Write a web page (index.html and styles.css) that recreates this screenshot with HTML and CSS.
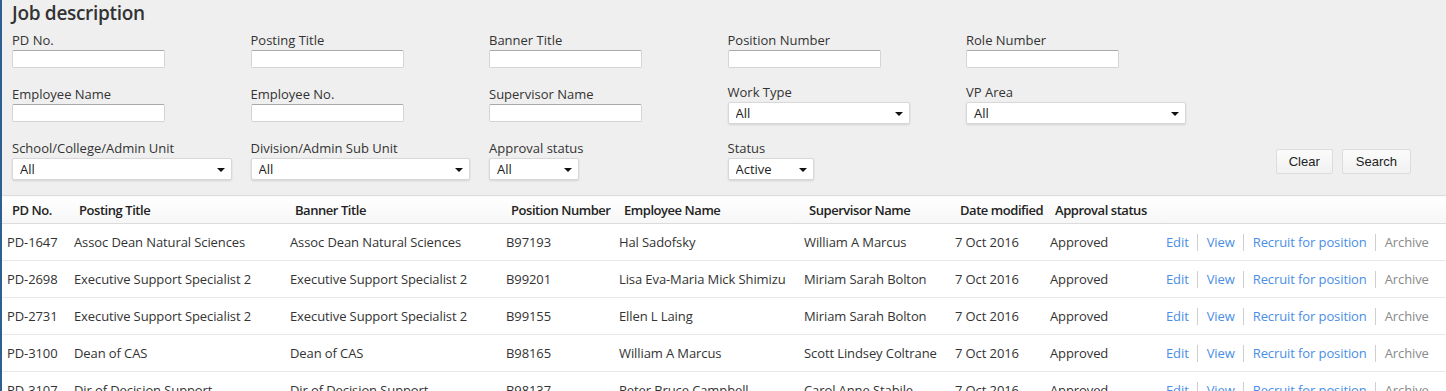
FILE: index.html
```html
<html>
  <head>
    <title>Job description</title>
    <link rel="stylesheet" href="styles.css">
  </head>
  <body>
    <div class="filters">
      <h1>Job description</h1>

      <div class="grid">
        <div class="field"><label>PD No.</label><input type="text"></div>
        <div class="field"><label>Posting Title</label><input type="text"></div>
        <div class="field"><label>Banner Title</label><input type="text"></div>
        <div class="field"><label>Position Number</label><input type="text"></div>
        <div class="field"><label>Role Number</label><input type="text"></div>
        <div></div>

        <div class="field"><label>Employee Name</label><input type="text"></div>
        <div class="field"><label>Employee No.</label><input type="text"></div>
        <div class="field"><label>Supervisor Name</label><input type="text"></div>
        <div class="field">
          <label>Work Type</label>
          <div class="select w182"><select><option>All</option></select></div>
        </div>
        <div class="field">
          <label>VP Area</label>
          <div class="select w220"><select><option>All</option></select></div>
        </div>
        <div></div>

        <div class="field">
          <label>School/College/Admin Unit</label>
          <div class="select w220"><select><option>All</option></select></div>
        </div>
        <div class="field">
          <label>Division/Admin Sub Unit</label>
          <div class="select w219"><select><option>All</option></select></div>
        </div>
        <div class="field">
          <label>Approval status</label>
          <div class="select w90"><select><option>All</option></select></div>
        </div>
        <div class="field">
          <label>Status</label>
          <div class="select w86"><select><option>Active</option></select></div>
        </div>
        <div class="buttons">
          <button>Clear</button>
          <button class="wide">Search</button>
        </div>
      </div>
    </div>

    <table class="results">
      <colgroup>
        <col style="width: 67px">
        <col style="width: 216px">
        <col style="width: 216px">
        <col style="width: 113px">
        <col style="width: 185px">
        <col style="width: 151px">
        <col style="width: 95px">
        <col style="width: 116px">
        <col>
      </colgroup>
      <thead>
        <tr>
          <th>PD No.</th>
          <th>Posting Title</th>
          <th>Banner Title</th>
          <th>Position Number</th>
          <th>Employee Name</th>
          <th>Supervisor Name</th>
          <th>Date modified</th>
          <th>Approval status</th>
          <th></th>
        </tr>
      </thead>
      <tbody>
        <tr>
          <td>PD-1647</td>
          <td>Assoc Dean Natural Sciences</td>
          <td>Assoc Dean Natural Sciences</td>
          <td>B97193</td>
          <td>Hal Sadofsky</td>
          <td>William A Marcus</td>
          <td>7 Oct 2016</td>
          <td>Approved</td>
          <td><div class="actions"><a href="#">Edit</a><span class="sep"></span><a href="#">View</a><span class="sep"></span><a href="#">Recruit for position</a><span class="sep"></span><a href="#" class="muted">Archive</a></div></td>
        </tr>
        <tr>
          <td>PD-2698</td>
          <td>Executive Support Specialist 2</td>
          <td>Executive Support Specialist 2</td>
          <td>B99201</td>
          <td>Lisa Eva-Maria Mick Shimizu</td>
          <td>Miriam Sarah Bolton</td>
          <td>7 Oct 2016</td>
          <td>Approved</td>
          <td><div class="actions"><a href="#">Edit</a><span class="sep"></span><a href="#">View</a><span class="sep"></span><a href="#">Recruit for position</a><span class="sep"></span><a href="#" class="muted">Archive</a></div></td>
        </tr>
        <tr>
          <td>PD-2731</td>
          <td>Executive Support Specialist 2</td>
          <td>Executive Support Specialist 2</td>
          <td>B99155</td>
          <td>Ellen L Laing</td>
          <td>Miriam Sarah Bolton</td>
          <td>7 Oct 2016</td>
          <td>Approved</td>
          <td><div class="actions"><a href="#">Edit</a><span class="sep"></span><a href="#">View</a><span class="sep"></span><a href="#">Recruit for position</a><span class="sep"></span><a href="#" class="muted">Archive</a></div></td>
        </tr>
        <tr>
          <td>PD-3100</td>
          <td>Dean of CAS</td>
          <td>Dean of CAS</td>
          <td>B98165</td>
          <td>William A Marcus</td>
          <td>Scott Lindsey Coltrane</td>
          <td>7 Oct 2016</td>
          <td>Approved</td>
          <td><div class="actions"><a href="#">Edit</a><span class="sep"></span><a href="#">View</a><span class="sep"></span><a href="#">Recruit for position</a><span class="sep"></span><a href="#" class="muted">Archive</a></div></td>
        </tr>
        <tr>
          <td>PD-3107</td>
          <td>Dir of Decision Support</td>
          <td>Dir of Decision Support</td>
          <td>B98137</td>
          <td>Peter Bruce Campbell</td>
          <td>Carol Anne Stabile</td>
          <td>7 Oct 2016</td>
          <td>Approved</td>
          <td><div class="actions"><a href="#">Edit</a><span class="sep"></span><a href="#">View</a><span class="sep"></span><a href="#">Recruit for position</a><span class="sep"></span><a href="#" class="muted">Archive</a></div></td>
        </tr>
      </tbody>
    </table>
  </body>
</html>
```

FILE: styles.css
```css
/* Page */
body {
  margin: 0;
  border-left: 2px solid #2f5f90;
  min-height: 100vh;
  font-family: "Open Sans", "Liberation Sans", sans-serif;
  font-size: 13px;
  color: #333;
  background: #fff;
}

/* Filters */
.filters {
  background: #efefef;
  padding: 0 0 15px 10px;
}
.filters h1 {
  margin: 0;
  font-size: 19px;
  line-height: 27px;
  font-weight: 600;
  letter-spacing: -0.3px;
  color: #333;
  padding-top: 0;
}
.grid {
  display: grid;
  grid-template-columns: repeat(5, 238.5px) 1fr;
  row-gap: 15px;
  align-items: center;
  margin-top: 4px;
}
.field label {
  display: block;
  line-height: 18px;
  color: #333;
}
.field input {
  display: block;
  margin-top: 1px;
  width: 153px;
  height: 18px;
  box-sizing: border-box;
  border: 1px solid #d4d4d4;
  border-top-color: #a9a9a9;
  border-radius: 2px;
  background: #fff;
  padding: 0 4px;
}
.select {
  position: relative;
  margin-top: 1px;
  height: 22px;
}
.select select {
  -webkit-appearance: none;
  appearance: none;
  width: 100%;
  height: 22px;
  box-sizing: border-box;
  border: 1px solid #d8d8d8;
  border-radius: 2px;
  background: #fff;
  box-shadow: 0 1px 2px rgba(0, 0, 0, 0.12);
  font-family: "Open Sans", "Liberation Sans", sans-serif;
  font-size: 13px;
  color: #222;
  padding: 0 0 0 7px;
}
.select::after {
  content: "";
  position: absolute;
  right: 7px;
  top: 10px;
  border-left: 4px solid transparent;
  border-right: 4px solid transparent;
  border-top: 4px solid #111;
}
.w182 { width: 182px; }
.w220 { width: 220px; }
.w219 { width: 219px; }
.w90 { width: 90px; }
.w86 { width: 86px; }

.buttons {
  grid-column: 6;
  display: flex;
  justify-content: flex-end;
  gap: 9px;
  padding-right: 35px;
  align-self: end;
  margin-bottom: 6px;
}
.buttons button {
  height: 25px;
  padding: 0 12px;
  border: 1px solid #dcdcdc;
  border-radius: 2px;
  background: linear-gradient(#fbfbfb, #f1f1f1);
  font-family: "Liberation Sans", Arial, sans-serif;
  font-size: 13px;
  color: #222;
}
.buttons button.wide {
  padding: 0 13px;
}

/* Results */
.results {
  width: 100%;
  table-layout: fixed;
  border-collapse: collapse;
  font-size: 13px;
  color: #333;
}
.results th {
  height: 28px;
  text-align: left;
  padding: 0 0 0 10px;
  font-weight: 600;
  letter-spacing: -0.45px;
  color: #222;
  white-space: nowrap;
  background: linear-gradient(#fff, #f6f6f6);
  border-top: 1px solid #dcdcdc;
  border-bottom: 1px solid #dcdcdc;
}
.results td {
  height: 37px;
  padding: 0 0 0 5px;
  white-space: nowrap;
  letter-spacing: -0.1px;
  border-bottom: 1px solid #e8e8e8;
}
.actions {
  display: flex;
  align-items: center;
}
.actions a {
  color: #4a8ee6;
  text-decoration: none;
}
.actions a.muted {
  color: #8a8a8a;
}
.sep {
  width: 1px;
  height: 17px;
  background: #cfcfcf;
  margin: 0 9px 0 8px;
}
```
